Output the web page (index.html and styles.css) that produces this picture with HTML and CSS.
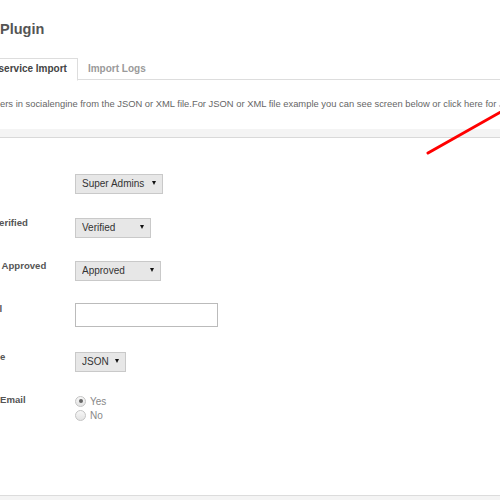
FILE: index.html
```html
<!DOCTYPE html>
<html>
<head>
<meta charset="utf-8">
<link rel="stylesheet" href="styles.css">
</head>
<body>
<div class="page">
  <h2 class="title">Plugin</h2>
  <div class="tabs">
    <div class="tab active">eservice Import</div>
    <div class="tab">Import Logs</div>
  </div>
  <p class="desc">ers in socialengine from the JSON or XML file.For JSON or XML file example you can see screen below or click here for <a class="link" href="#">JSON</a></p>
  <div class="formbox">
    <div class="formhead"></div>
    <div class="rows">
      <div class="row extra">
        <div class="label"><span class="cut-hidden">Member Level</span></div>
        <div class="element"><span class="select w-super"><select><option>Super Admins</option></select></span></div>
      </div>
      <div class="row">
        <div class="label"><span class="cut-v">Verified</span></div>
        <div class="element"><span class="select w-verified"><select><option>Verified</option></select></span></div>
      </div>
      <div class="row">
        <div class="label"><span class="cut-a">Approved</span></div>
        <div class="element"><span class="select w-approved"><select><option>Approved</option></select></span></div>
      </div>
      <div class="row extra">
        <div class="label"><span class="cut-l">l</span></div>
        <div class="element"><input class="text" type="text"></div>
      </div>
      <div class="row">
        <div class="label"><span class="cut-e">e</span></div>
        <div class="element"><span class="select w-json"><select><option>JSON</option></select></span></div>
      </div>
      <div class="row">
        <div class="label"><span class="cut-email">Email</span></div>
        <div class="element">
          <ul class="radios">
            <li><input type="radio" name="email" checked><span>Yes</span></li>
            <li><input type="radio" name="email"><span>No</span></li>
          </ul>
        </div>
      </div>
    </div>
    <div class="formfoot"></div>
  </div>
</div>
<svg class="annot" width="500" height="500" viewBox="0 0 500 500">
  <line x1="428" y1="153" x2="506" y2="109" stroke="#ff0000" stroke-width="3" stroke-linecap="round"/>
</svg>
</body>
</html>
```
FILE: styles.css
```css
html, body {
  margin: 0;
  padding: 0;
  background: #fff;
  overflow: hidden;
}
body {
  font-family: "Liberation Sans", Arial, sans-serif;
  color: #555;
  width: 500px;
  height: 500px;
  position: relative;
}
.page {
  width: 500px;
}
.title {
  margin: 0;
  padding-top: 20px;
  font-size: 14.5px;
  line-height: 18px;
  font-weight: bold;
  color: #555;
}
.tabs {
  display: flex;
  margin-top: 20px;
  border-bottom: 1px solid #ddd;
  height: 21px;
}
.tab {
  font-size: 10px;
  line-height: 12px;
  font-weight: bold;
  color: #9a9a9a;
  padding: 4px 9px;
  border: 1px solid transparent;
  border-bottom: none;
  white-space: nowrap;
}
.tab.active {
  color: #444;
  background: #fff;
  border-color: #ddd;
  border-left: none;
  margin-left: -10px;
  padding-left: 3px;
  padding-right: 10px;
  height: 13px;
  margin-bottom: -1px;
  border-bottom: 1px solid #fff;
}
.desc {
  margin: 17px 0 18px 0;
  font-size: 9.4px;
  line-height: 14px;
  color: #666;
  white-space: nowrap;
}
.link {
  color: #5b8db8;
  text-decoration: none;
}
.formhead {
  height: 8px;
  background: #f4f4f4;
  border-bottom: 1px solid #d9d9d9;
}
.rows {
  height: 322px;
  padding-top: 35px;
}
.row {
  display: flex;
  align-items: flex-start;
  margin-bottom: 23px;
}
.row.extra {
  margin-bottom: 24px;
}
.label {
  width: 75px;
  font-size: 9.6px;
  line-height: 12px;
  font-weight: bold;
  color: #555;
  white-space: nowrap;
  overflow: hidden;
}
.cut-hidden { display: inline-block; margin-left: -120px; }
.cut-v { display: inline-block; margin-left: -6.8px; }
.cut-a { display: inline-block; margin-left: 1.5px; }
.cut-l { display: inline-block; margin-left: -0.5px; }
.cut-e { display: inline-block; margin-left: 0; }
.cut-email { display: inline-block; margin-left: 0; }
.element {
  flex: 1;
}
.select {
  display: inline-block;
  position: relative;
  height: 20px;
}
.select select {
  appearance: none;
  -webkit-appearance: none;
  height: 20px;
  width: 100%;
  margin: 0;
  border: 1px solid #c9c9c9;
  border-radius: 0;
  background: #e7e7e7;
  font-family: "Liberation Sans", Arial, sans-serif;
  font-size: 10px;
  color: #333;
  padding: 0 0 0 6px;
  box-sizing: border-box;
}
.select::after {
  content: "";
  position: absolute;
  right: 7px;
  top: 8px;
  border-left: 2.5px solid transparent;
  border-right: 2.5px solid transparent;
  border-top: 4px solid #111;
  pointer-events: none;
}
.w-super { width: 88px; }
.w-verified { width: 76px; }
.w-approved { width: 86px; }
.w-json { width: 51px; }
.text {
  display: block;
  width: 143px;
  height: 24px;
  margin: 0;
  box-sizing: border-box;
  border: 1px solid #bbb;
  background: #fff;
  padding: 0 4px;
}
.radios {
  list-style: none;
  margin: 0;
  padding: 0;
}
.radios li {
  display: flex;
  align-items: center;
  height: 14px;
  font-size: 10px;
  color: #888;
}
.radios input {
  appearance: none;
  -webkit-appearance: none;
  width: 11px;
  height: 11px;
  margin: 0 4px 0 0;
  border: 1px solid #c4c4c4;
  border-radius: 50%;
  background: linear-gradient(#f7f7f7, #e3e3e3);
  box-sizing: border-box;
  position: relative;
}
.radios input:checked::after {
  content: "";
  position: absolute;
  left: 2.5px;
  top: 2.5px;
  width: 4px;
  height: 4px;
  border-radius: 50%;
  background: #666;
}
.formfoot {
  border-top: 1px solid #dcdcdc;
  background: #f4f4f4;
  height: 10px;
}
.annot {
  position: absolute;
  left: 0;
  top: 0;
  pointer-events: none;
}
```
